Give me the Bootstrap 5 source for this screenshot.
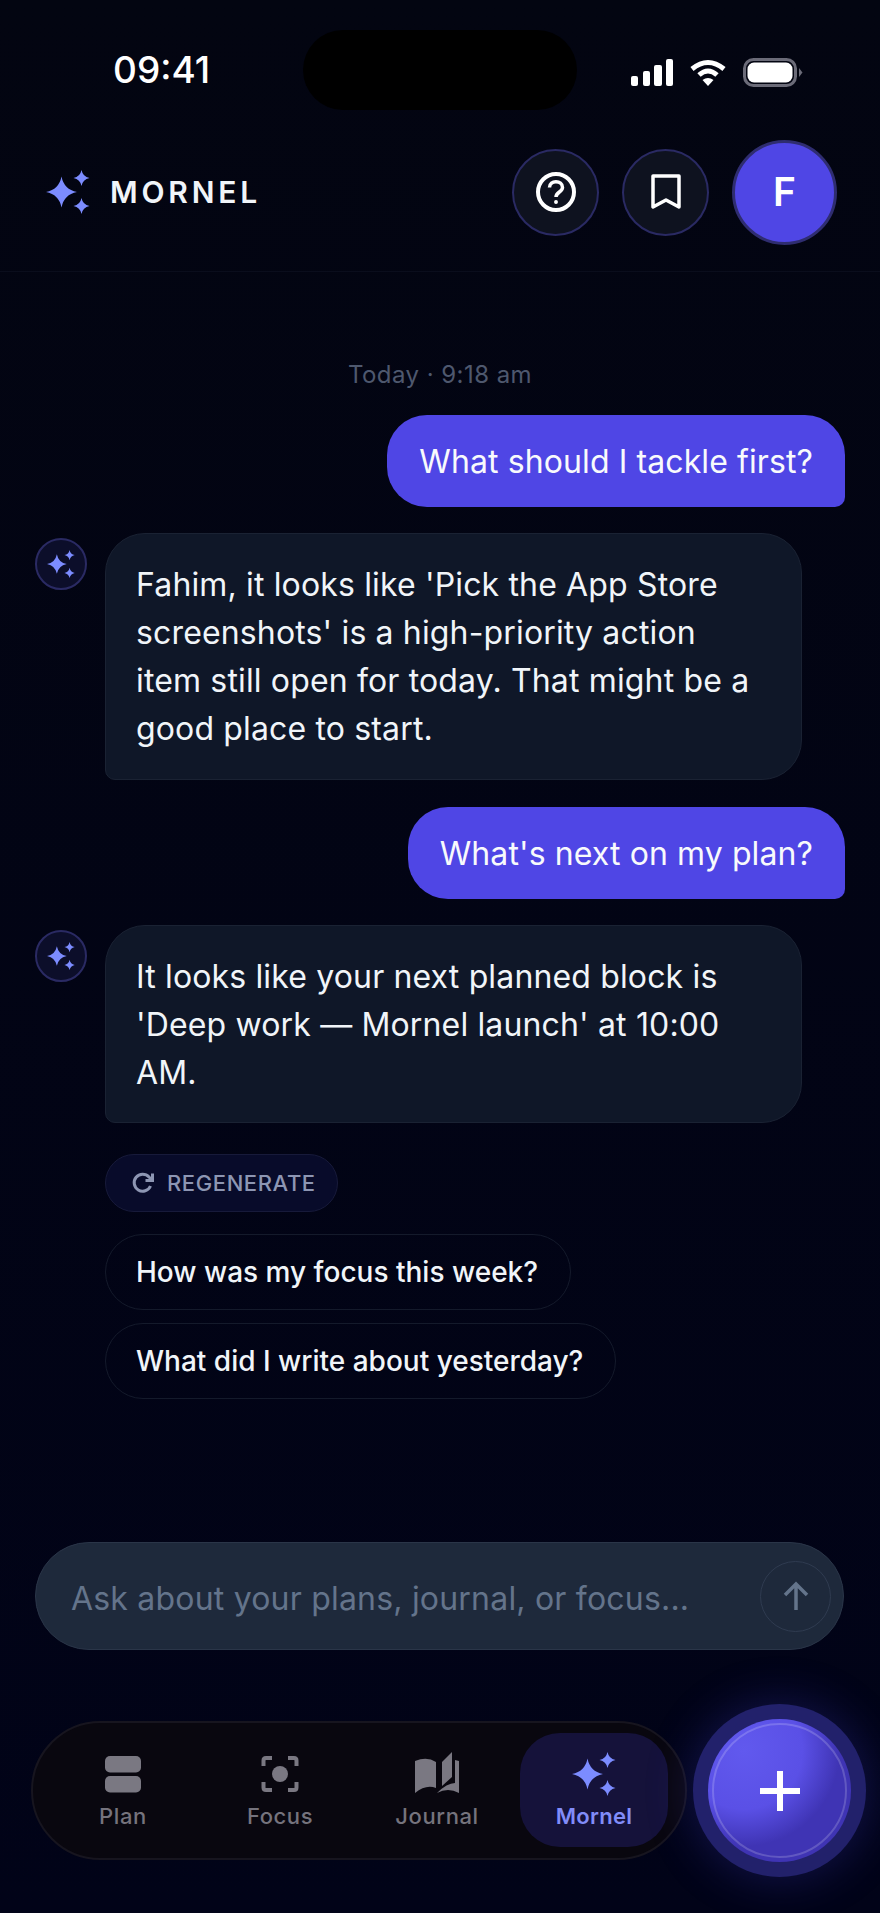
<!DOCTYPE html>
<html lang="en">

<head>
    <meta charset="UTF-8">
    <meta name="viewport" content="width=device-width, initial-scale=1.0">
    <title>Mornel</title>
    <link rel="stylesheet" href="https://cdn.jsdelivr.net/npm/bootstrap@5.3.3/dist/css/bootstrap.min.css">
    <style>
        html, body {
            height: 100%;
        }

        body {
            background: linear-gradient(180deg, #030511, #010318);
            font-family: Inter, "Liberation Sans", sans-serif;
            color: #f1f5f9;
        }

        .screen {
            width: 880px;
            height: 1913px;
            overflow: hidden;
        }

        .status-bar {
            height: 140px;
            padding: 30px 77px 30px 113px;
        }

        .clock {
            width: 190px;
            font-size: 37px;
            font-weight: 500;
            color: #fff;
            line-height: 80px;
        }

        .island {
            width: 274px;
            height: 80px;
            background: #000;
            border-radius: 40px;
        }

        .status-icons {
            margin-left: 54px;
            gap: 17px;
        }

        .top-head {
            height: 132px;
            padding: 0 43px 27px 46px;
            border-bottom: 1px solid #0a0d1c;
        }

        .brand-name {
            font-size: 30px;
            font-weight: 600;
            letter-spacing: 3.8px;
            margin-left: 20px;
            color: #f1f5f9;
        }

        .head-btn {
            width: 87px;
            height: 87px;
            background: #0e121f;
            border: 2px solid #2a2a63;
            margin-right: 23px;
        }

        .avatar-btn {
            width: 105px;
            height: 105px;
            background: #4f46e5;
            border: 3px solid #2f2d70;
            color: #fff;
            font-size: 39px;
            font-weight: 600;
        }

        .chat {
            padding: 86px 35px 0;
        }

        .stamp {
            font-size: 24px;
            line-height: 32px;
            letter-spacing: .45px;
            color: #4e586e;
            padding-top: 1px;
            margin-bottom: 24px;
        }

        .bubble-user {
            background: #4f46e5;
            color: #f8fafc;
            font-size: 32px;
            line-height: 48px;
            letter-spacing: .1px;
            padding: 23px 32px 21px;
            border-radius: 40px 40px 10px 40px;
            margin-bottom: 26px;
        }

        .msg-row {
            margin-bottom: 27px;
        }

        .bot-dot {
            width: 52px;
            height: 52px;
            background: #0c0e2a;
            border: 2px solid #2a2a63;
            margin-top: 5px;
            margin-right: 18px;
            flex-shrink: 0;
        }

        .bubble-bot {
            width: 697px;
            background: #0f1728;
            border: 1px solid #1a2233;
            color: #f1f5f9;
            font-size: 32px;
            line-height: 48px;
            letter-spacing: .15px;
            padding: 27px 40px 25.500px 30px;
            border-radius: 40px 40px 40px 10px;
        }

        .follow-ups {
            margin-left: 70px;
            margin-top: 31px;
        }

        .regen {
            height: 58px;
            padding: 0 21px 0 26px;
            background: #080b2a;
            border: 1px solid #171a3a;
            color: #8d96b3;
            font-size: 22px;
            font-weight: 500;
            letter-spacing: .6px;
            gap: 13px;
            margin-bottom: 22px;
        }

        .chip {
            height: 76px;
            padding: 0 32px 0 30px;
            background: transparent;
            border: 1px solid #141a2b;
            color: #f1f5f9;
            font-size: 28px;
            font-weight: 500;
            margin-bottom: 13px;
        }

        .ask-box {
            height: 108px;
            margin: 0 36px 0 35px;
            padding: 0 12px 0 35px;
            background: #1e293b;
            border: 1px solid #2a3548;
        }

        .ask-box .form-control {
            background: transparent;
            border: 0;
            box-shadow: none;
            padding: 6px 0 0;
            font-size: 32px;
            letter-spacing: .2px;
            color: #e2e8f0;
        }

        .ask-box .form-control::placeholder {
            color: #64748b;
            opacity: 1;
        }

        .send-btn {
            width: 71px;
            height: 71px;
            flex-shrink: 0;
            border: 1px solid #2f3b50;
            background: transparent;
        }

        .dock {
            padding: 69px 29px 51px 31px;
        }

        .tab-bar {
            width: 656px;
            height: 139px;
            padding: 10px 17px 11px 16px;
            gap: 9px;
            background: #09070f;
            border: 2px solid #17151f;
            border-radius: 70px;
        }

        .tab-item {
            width: 148px;
            height: 114px;
            padding-top: 19px;
            border-radius: 40px;
            color: #75737d;
            font-size: 22px;
            line-height: 26px;
            font-weight: 500;
            letter-spacing: .6px;
        }

        .tab-item svg {
            display: block;
            margin-bottom: 7px;
        }

        .tab-on {
            background: #15123a;
            color: #818cf8;
            font-weight: 600;
            letter-spacing: .3px;
        }

        .fab {
            width: 143px;
            height: 143px;
            margin-left: 21px;
            border: 0;
            background:
                radial-gradient(circle at 25% 22%, #6159ee 0, #5a50e6 38%, rgba(90, 80, 230, 0) 62%),
                #3f34b4;
            box-shadow: 0 0 0 15px #22216b, 0 0 45px 18px rgba(60, 55, 190, .3);
            outline: 2px solid rgba(255, 255, 255, .18);
            outline-offset: -6px;
        }
    </style>
</head>

<body>
    <div class="screen d-flex flex-column">
        <div class="status-bar d-flex align-items-start">
            <div class="clock">09:41</div>
            <div class="island"></div>
            <div class="status-icons d-flex align-items-center mt-4 pt-1">
                <svg width="42" height="27" viewBox="0 0 42 27" fill="#fff">
                    <rect x="0" y="17" width="7" height="10" rx="2" />
                    <rect x="12" y="12" width="7" height="15" rx="2" />
                    <rect x="23" y="6" width="8" height="21" rx="2" />
                    <rect x="35" y="0" width="7" height="27" rx="2" />
                </svg>
                <svg width="36" height="27" viewBox="0 0 36 27">
                    <path d="M2 10Q18 -3 34 10" fill="none" stroke="#fff" stroke-width="5" />
                    <path d="M9 16Q18 8 27 16" fill="none" stroke="#fff" stroke-width="5" />
                    <path d="M12.500 21Q18 17 23.500 21L18 27Z" fill="#fff" />
                </svg>
                <svg width="60" height="29" viewBox="0 0 60 29">
                    <rect x="1.500" y="1.500" width="51" height="26" rx="9" fill="none" stroke="#6b6b78" stroke-width="3" />
                    <rect x="4.500" y="4.500" width="45" height="20" rx="6.500" fill="#fff" />
                    <path d="M56 10L59.500 14.500L56 19Z" fill="#6b6b78" />
                </svg>
            </div>
        </div>

        <div class="top-head d-flex align-items-center">
            <svg width="44" height="44" viewBox="0 0 44 44" fill="#7c8cff">
                <path d="M15.500 6.500Q18 19.500 31 22Q18 24.500 15.500 37.500Q13 24.500 0 22Q13 19.500 15.500 6.500Z" />
                <path d="M35.500 0Q36.800 6.700 43.500 8Q36.800 9.300 35.500 16Q34.200 9.300 27.500 8Q34.200 6.700 35.500 0Z" />
                <path d="M35.500 28Q36.800 34.700 43.500 36Q36.800 37.300 35.500 44Q34.200 37.300 27.500 36Q34.200 34.700 35.500 28Z" />
            </svg>
            <span class="brand-name">MORNEL</span>
            <div class="ms-auto d-flex align-items-center">
                <div class="head-btn rounded-circle d-flex align-items-center justify-content-center">
                    <svg width="42" height="42" viewBox="0 0 42 42" fill="none" stroke="#fff" stroke-width="4">
                        <circle cx="21" cy="21" r="18" />
                        <path d="M14.500 16.500C14.500 8.500 27.500 9 27.500 16.500C27.500 21 21 21 21 26" stroke-width="3.500" />
                        <circle cx="21" cy="31" r="1.200" stroke-width="1.500" fill="#fff" />
                    </svg>
                </div>
                <div class="head-btn rounded-circle d-flex align-items-center justify-content-center">
                    <svg width="30" height="36" viewBox="0 0 30 36" fill="none" stroke="#fff" stroke-width="3.500">
                        <path d="M2 2H28V33L15 26L2 33Z" stroke-linejoin="round" />
                    </svg>
                </div>
                <div class="avatar-btn rounded-circle d-flex align-items-center justify-content-center">F</div>
            </div>
        </div>

        <div class="chat flex-grow-1 d-flex flex-column">
            <div class="stamp text-center">Today · 9:18 am</div>

            <div class="bubble-user align-self-end">What should I tackle first?</div>

            <div class="msg-row d-flex align-items-start">
                <div class="bot-dot rounded-circle d-flex align-items-center justify-content-center">
                    <svg width="28" height="28" viewBox="0 0 44 44" fill="#7c8cff">
                        <path d="M15.500 6.500Q18 19.500 31 22Q18 24.500 15.500 37.500Q13 24.500 0 22Q13 19.500 15.500 6.500Z" />
                        <path d="M35.500 0Q36.800 6.700 43.500 8Q36.800 9.300 35.500 16Q34.200 9.300 27.500 8Q34.200 6.700 35.500 0Z" />
                        <path d="M35.500 28Q36.800 34.700 43.500 36Q36.800 37.300 35.500 44Q34.200 37.300 27.500 36Q34.200 34.700 35.500 28Z" />
                    </svg>
                </div>
                <div class="bubble-bot">Fahim, it looks like 'Pick the App Store screenshots' is a high-priority action item still open for today. That might be a good place to start.</div>
            </div>

            <div class="bubble-user align-self-end">What's next on my plan?</div>

            <div class="d-flex align-items-start">
                <div class="bot-dot rounded-circle d-flex align-items-center justify-content-center">
                    <svg width="28" height="28" viewBox="0 0 44 44" fill="#7c8cff">
                        <path d="M15.500 6.500Q18 19.500 31 22Q18 24.500 15.500 37.500Q13 24.500 0 22Q13 19.500 15.500 6.500Z" />
                        <path d="M35.500 0Q36.800 6.700 43.500 8Q36.800 9.300 35.500 16Q34.200 9.300 27.500 8Q34.200 6.700 35.500 0Z" />
                        <path d="M35.500 28Q36.800 34.700 43.500 36Q36.800 37.300 35.500 44Q34.200 37.300 27.500 36Q34.200 34.700 35.500 28Z" />
                    </svg>
                </div>
                <div class="bubble-bot">It looks like your next planned block is 'Deep work — Mornel launch' at 10:00 AM.</div>
            </div>

            <div class="follow-ups d-flex flex-column align-items-start">
                <div class="regen rounded-pill d-flex align-items-center">
                    <svg width="22" height="22" viewBox="0 0 22 22" fill="none" stroke="#8d96b3" stroke-width="3">
                        <path d="M18.500 14A8.500 8.500 0 1 1 17 5L20 8" />
                        <path d="M20.500 1.500V8.500H13.500" />
                    </svg>
                    REGENERATE
                </div>
                <div class="chip rounded-pill d-flex align-items-center">How was my focus this week?</div>
                <div class="chip rounded-pill d-flex align-items-center">What did I write about yesterday?</div>
            </div>
        </div>

        <div class="ask-box rounded-pill d-flex align-items-center">
            <input type="text" class="form-control" placeholder="Ask about your plans, journal, or focus...">
            <div class="send-btn rounded-circle d-flex align-items-center justify-content-center">
                <svg width="28" height="30" viewBox="0 0 28 30" fill="none" stroke="#64748b" stroke-width="3.500">
                    <path d="M14 29V3M3 14L14 3L25 14" />
                </svg>
            </div>
        </div>

        <div class="dock d-flex align-items-center">
            <div class="tab-bar d-flex flex-shrink-0">
                <div class="tab-item d-flex flex-column align-items-center">
                    <svg width="44" height="44" viewBox="0 0 44 44" fill="#7a7882">
                        <rect x="4" y="4" width="36" height="16.500" rx="5" />
                        <rect x="4" y="24" width="36" height="16.500" rx="5" />
                    </svg>
                    Plan
                </div>
                <div class="tab-item d-flex flex-column align-items-center">
                    <svg width="44" height="44" viewBox="0 0 44 44" fill="none" stroke="#7a7882" stroke-width="4">
                        <path d="M14 6H8Q5.500 6 5.500 8.500V14M30 6H36Q38.500 6 38.500 8.500V14M14 38H8Q5.500 38 5.500 35.500V30M30 38H36Q38.500 38 38.500 35.500V30" />
                        <circle cx="22" cy="22" r="8" fill="#7a7882" stroke="none" />
                    </svg>
                    Focus
                </div>
                <div class="tab-item d-flex flex-column align-items-center">
                    <svg width="44" height="44" viewBox="0 0 44 44" fill="#7a7882">
                        <path d="M0 9Q12 4 21 10V36Q11 32 0 41Z" />
                        <path d="M27 10L37 0V25L27 34Z" />
                        <path d="M40 8L44 9V41Q33 35 22 41Q32 31 40 31Z" />
                    </svg>
                    Journal
                </div>
                <div class="tab-item tab-on d-flex flex-column align-items-center">
                    <svg width="44" height="44" viewBox="0 0 44 44" fill="#7c8cff">
                        <path d="M15.500 6.500Q18 19.500 31 22Q18 24.500 15.500 37.500Q13 24.500 0 22Q13 19.500 15.500 6.500Z" />
                        <path d="M35.500 0Q36.800 6.700 43.500 8Q36.800 9.300 35.500 16Q34.200 9.300 27.500 8Q34.200 6.700 35.500 0Z" />
                        <path d="M35.500 28Q36.800 34.700 43.500 36Q36.800 37.300 35.500 44Q34.200 37.300 27.500 36Q34.200 34.700 35.500 28Z" />
                    </svg>
                    Mornel
                </div>
            </div>
            <div class="fab rounded-circle flex-shrink-0 d-flex align-items-center justify-content-center">
                <svg width="40" height="40" viewBox="0 0 40 40" fill="#fff">
                    <rect x="17" y="0" width="6" height="40" />
                    <rect x="0" y="17" width="40" height="6" />
                </svg>
            </div>
        </div>
    </div>

    <script src="https://cdn.jsdelivr.net/npm/bootstrap@5.3.3/dist/js/bootstrap.bundle.min.js"></script>
</body>

</html>
